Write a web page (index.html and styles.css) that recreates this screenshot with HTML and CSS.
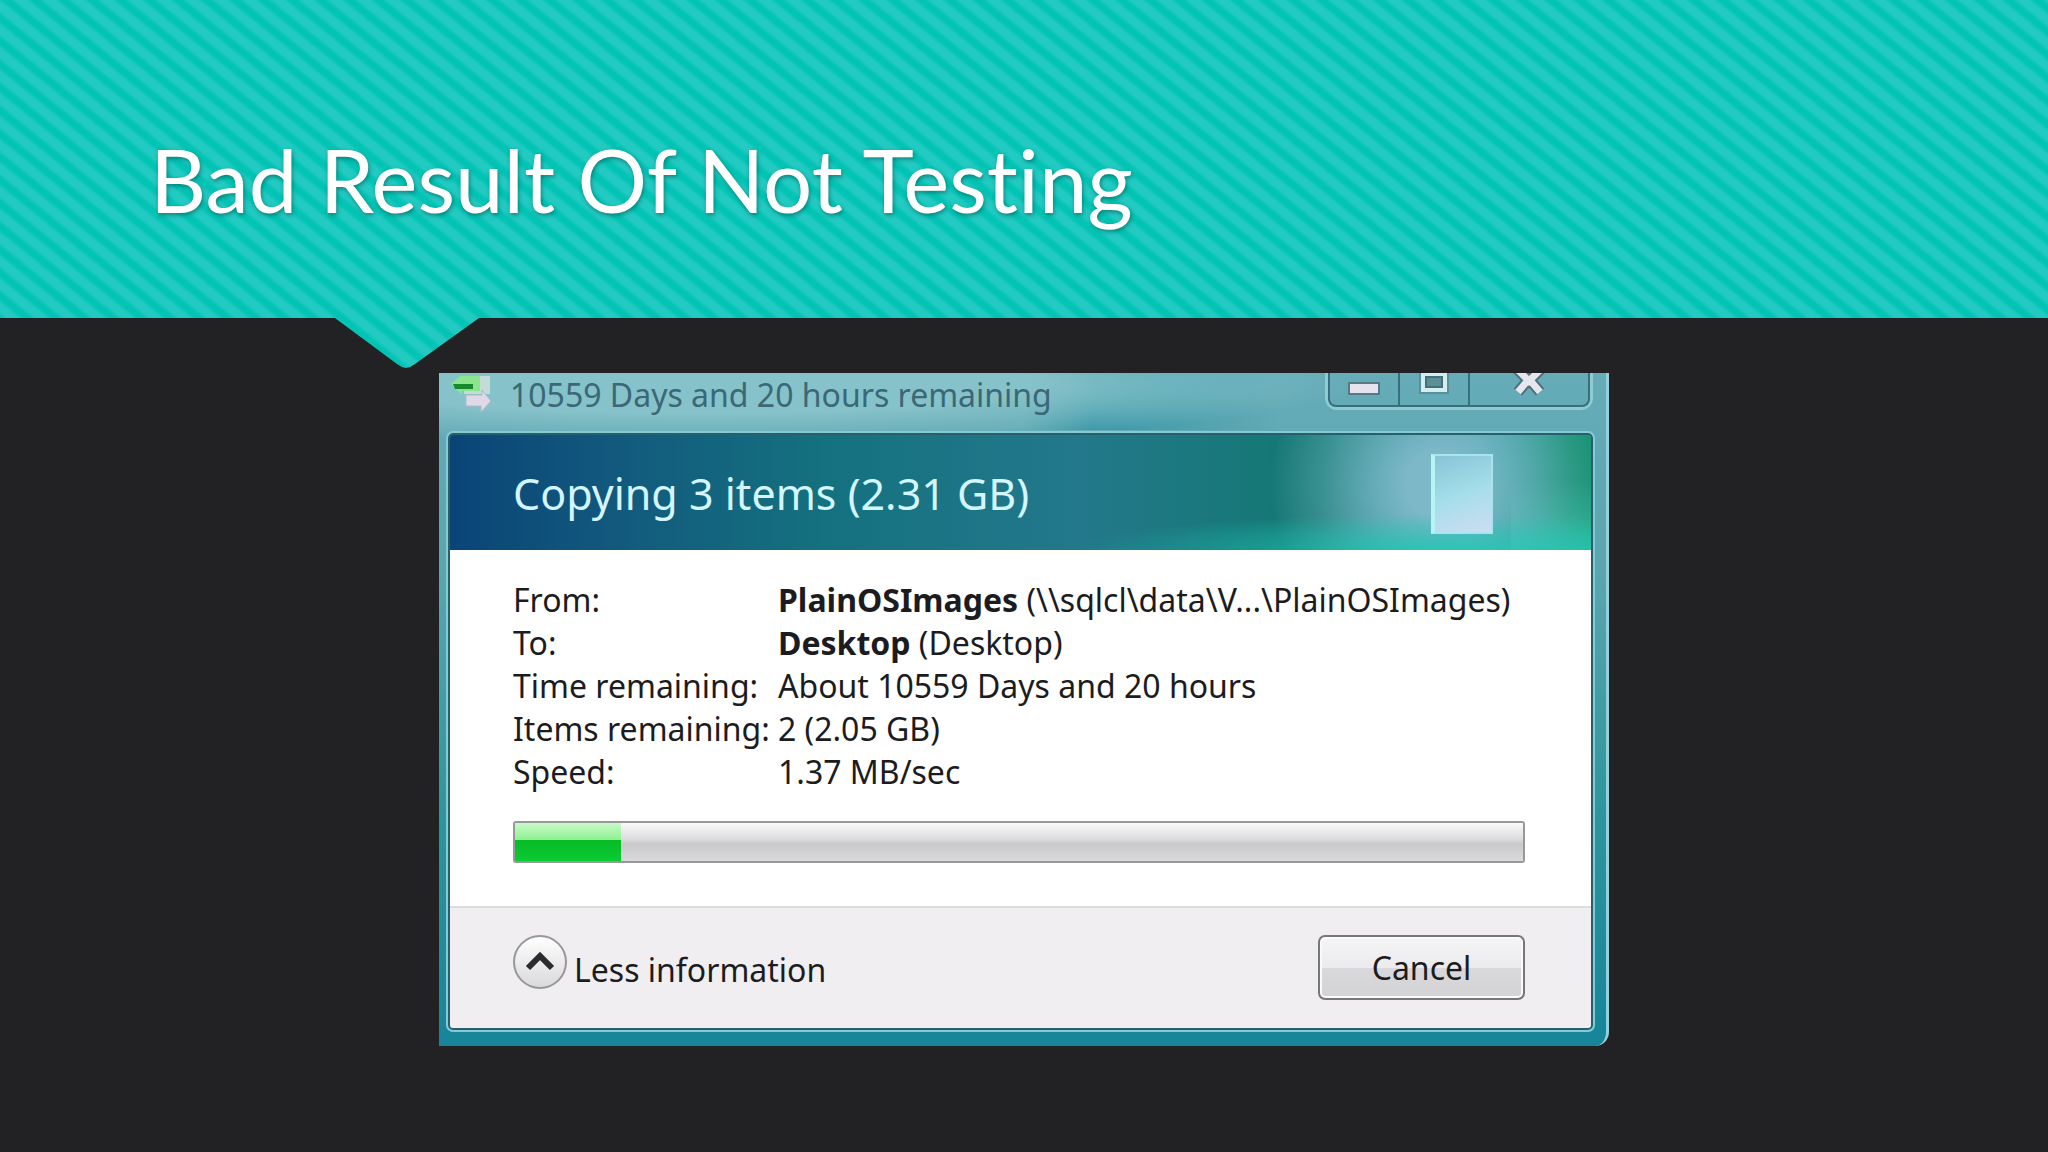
FILE: index.html
```html
<!DOCTYPE html>
<html lang="en">

<head>
    <meta charset="UTF-8">
    <meta name="viewport" content="width=device-width, initial-scale=1.0">
    <title>Bad Result Of Not Testing</title>
    <link rel="stylesheet" href="styles.css">
</head>

<body>
    <header class="header">
        <h1 class="title">Bad Result Of Not Testing</h1>
    </header>

    <main class="window">
        <div class="titlebar">
            <svg class="copy-icon" viewBox="0 0 42 42" aria-hidden="true">
                <path d="M14 3h26v18H14z" fill="#c4dcd6" />
                <path d="M1 11 L10 3 H30 V18 H12 V22 Z" fill="#8be58f" />
                <path d="M3 11h20v5H5z" fill="#168a2c" />
                <path d="M16 22h16v-5l9 11-10 11v-6H16z" fill="#dfd9e6" stroke="#aebcc6" />
            </svg>
            <span class="caption">10559 Days and 20 hours remaining</span>
            <div class="controls">
                <button class="ctrl" aria-label="Minimize">
                    <svg viewBox="0 0 32 24"><path d="M1 10h30v11H1z" fill="#e4e3f0" stroke="#557a86" stroke-width="2" /></svg>
                </button>
                <button class="ctrl" aria-label="Maximize">
                    <svg viewBox="0 0 32 24"><path d="M2-4h28v24H2z" fill="#d3eef0" stroke="#5d8d96" stroke-width="2" /><path d="M8 4h16v10H8z" fill="#5b8e97" stroke="#466f7a" stroke-width="2" /></svg>
                </button>
                <button class="ctrl ctrl-close" aria-label="Close">
                    <svg viewBox="0 0 32 24"><path d="M4-4 16 8 28-4M16 6 5 19M16 6 27 19" fill="none" stroke="#4f6f7b" stroke-width="11" /><path d="M4-4 16 8 28-4M16 6 5 19M16 6 27 19" fill="none" stroke="#e6e6ee" stroke-width="7" /></svg>
                </button>
            </div>
        </div>

        <div class="dialog">
            <div class="banner">
                <h2 class="heading">Copying 3 items (2.31 GB)</h2>
                <div class="page"></div>
            </div>

            <div class="content">
                <dl class="info">
                    <dt>From:</dt>
                    <dd><b>PlainOSImages</b> (\\sqlcl\data\V...\PlainOSImages)</dd>
                    <dt>To:</dt>
                    <dd><b>Desktop</b> (Desktop)</dd>
                    <dt>Time remaining:</dt>
                    <dd>About 10559 Days and 20 hours</dd>
                    <dt>Items remaining:</dt>
                    <dd>2 (2.05 GB)</dd>
                    <dt>Speed:</dt>
                    <dd>1.37 MB/sec</dd>
                </dl>
                <progress class="progress" value="105" max="1000" aria-label="Copy progress"></progress>
            </div>

            <div class="footer">
                <button class="less">
                    <svg viewBox="0 0 54 54" aria-hidden="true">
                        <defs>
                            <linearGradient id="round" x2="0" y2="1">
                                <stop offset="0" stop-color="#fff" />
                                <stop offset="1" stop-color="#d9d9dc" />
                            </linearGradient>
                        </defs>
                        <circle cx="27" cy="27" r="26" fill="url(#round)" stroke="#97979a" stroke-width="2" />
                        <path d="M15 33 27 21 39 33" fill="none" stroke="#2c2c30" stroke-width="6" />
                    </svg>
                    <span>Less information</span>
                </button>
                <button class="cancel">Cancel</button>
            </div>
        </div>
    </main>
</body>

</html>
```
FILE: styles.css
```css
* {
    box-sizing: border-box;
}

body {
    margin: 0;
    min-height: 100vh;
    background-color: #222123;
    font-family: "Noto Sans", "Open Sans", sans-serif;
}

button {
    font-family: inherit;
    padding: 0;
    border: none;
    background: none;
    cursor: pointer;
}

.header {
    position: relative;
    padding: 120px 150px 78px;
}

/* striped band with the notch under it */
.header::before {
    content: "";
    position: absolute;
    inset: 0 0 -50px;
    z-index: -1;
    background: repeating-linear-gradient(39deg, #02c4b4 0, #02c4b4 4px, #22cac2 8px, #22cac2 14px, #02c4b4 18px);
    clip-path: polygon(0 0, 100% 0, 100% calc(100% - 50px), 479px calc(100% - 50px), 415px calc(100% - 4px), 410px calc(100% - 1px), 406px 100%, 402px calc(100% - 1px), 397px calc(100% - 4px), 335px calc(100% - 50px), 0 calc(100% - 50px));
}

.title {
    margin: 0;
    color: #fff;
    font-family: Lato, "Noto Sans", sans-serif;
    font-size: 87px;
    font-weight: 400;
    font-variant-ligatures: none;
    line-height: 120px;
    text-shadow: 1px 2px 4px rgba(0, 60, 60, 0.5);
}

.window {
    max-width: 1170px;
    margin: 55px auto 0;
    padding: 0 13px 16px 9px;
    border-right: 3px solid #93d0dc;
    border-radius: 0 0 14px 0;
    background:
        radial-gradient(ellipse 660px 60px at 260px 10px, #86c2c9 50%, transparent),
        linear-gradient(90deg, transparent 50%, rgba(20, 135, 155, 0.5) 56%, transparent 72%) top / 100% 57px no-repeat,
        linear-gradient(#65acb8, #5aa5ae 30%, #2f959c 65%, #17849a);
}

.titlebar {
    display: flex;
    align-items: flex-start;
    height: 57px;
    padding-left: 2px;
}

.copy-icon {
    width: 42px;
    height: 42px;
    margin-right: 18px;
}

.caption {
    flex: 1;
    color: #3b6876;
    font-size: 32px;
    line-height: 44px;
    white-space: nowrap;
}

.controls {
    display: flex;
    height: 37px;
    border: 3px solid #8fccd2;
    border-top: none;
    border-radius: 0 0 12px 12px;
}

.ctrl {
    width: 70px;
    height: 34px;
    border: 2px solid #386f7c;
    border-width: 0 0 2px 2px;
    border-radius: 0 0 0 8px;
}

.ctrl + .ctrl {
    border-radius: 0;
}

.ctrl.ctrl-close {
    width: 122px;
    border-right-width: 2px;
    border-radius: 0 0 8px 0;
}

.ctrl svg {
    display: block;
    width: 32px;
    height: 24px;
    margin: 0 auto 8px;
}

.dialog {
    border: 2px solid #2b5d6b;
    outline: 2px solid #83cbd5;
    border-radius: 5px;
    overflow: hidden;
    margin-top: 3px;
}

.banner {
    display: flex;
    align-items: center;
    justify-content: space-between;
    height: 115px;
    padding: 2px 98px 0 63px;
    background:
        radial-gradient(ellipse 360px 36px at 990px 115px, rgba(30, 200, 180, 0.8), transparent),
        radial-gradient(ellipse 170px 170px at 990px 50px, #7cb8c8 20%, transparent),
        linear-gradient(transparent 40%, rgba(60, 210, 180, 0.6)) right / 80px 100% no-repeat,
        linear-gradient(90deg, #0a4477, #125a7d 15%, #14717f 33%, #23788b 55%, #127870 77%, #2a9a9c 90%, #0f8f6c 98%);
}

.heading {
    margin: 0;
    color: #d3f5ff;
    font-size: 43px;
    font-weight: 400;
    line-height: 56px;
}

.page {
    width: 62px;
    height: 80px;
    border: 2px solid #a7e4ec;
    border-left: 4px solid #b9f3f5;
    background: linear-gradient(160deg, #86c4d6, #a5deea 50%, #cdddf2);
}

.content {
    padding: 28px 66px 43px 63px;
    background-color: #fff;
}

.info {
    display: grid;
    grid-template-columns: 265px 1fr;
    margin: 0;
    color: #1c1c20;
    font-size: 32px;
    line-height: 43px;
    white-space: nowrap;
}

.info dd {
    margin: 0;
}

.progress {
    display: block;
    width: 100%;
    height: 42px;
    margin-top: 28px;
    border: 2px solid #98989b;
    border-radius: 3px;
    overflow: hidden;
    appearance: none;
}

.progress::-webkit-progress-bar {
    background: linear-gradient(#fafafa, #dddcde 42%, #c9c8ca 55%, #dad9db);
}

.progress::-webkit-progress-value {
    background: linear-gradient(#c8fbc8, #8df08f 45%, #06bb26 46%, #0bcb34);
}

.footer {
    display: flex;
    align-items: flex-start;
    justify-content: space-between;
    height: 122px;
    padding: 27px 66px 0 63px;
    border-top: 2px solid #dcdcde;
    background-color: #f0eef0;
}

.less {
    display: flex;
    align-items: center;
    gap: 7px;
    color: #1c1c20;
    font-size: 32px;
}

.less svg {
    width: 54px;
    height: 54px;
}

.less span {
    padding-top: 16px;
    line-height: 38px;
}

.cancel {
    width: 207px;
    height: 65px;
    border: 2px solid #77777a;
    border-radius: 7px;
    color: #1c1c20;
    font-size: 32px;
    background: linear-gradient(#f6f5f6, #ebeaec 50%, #d9d9db 51%, #d3d3d5);
    box-shadow: inset 0 0 0 2px #fafafa;
}
```
